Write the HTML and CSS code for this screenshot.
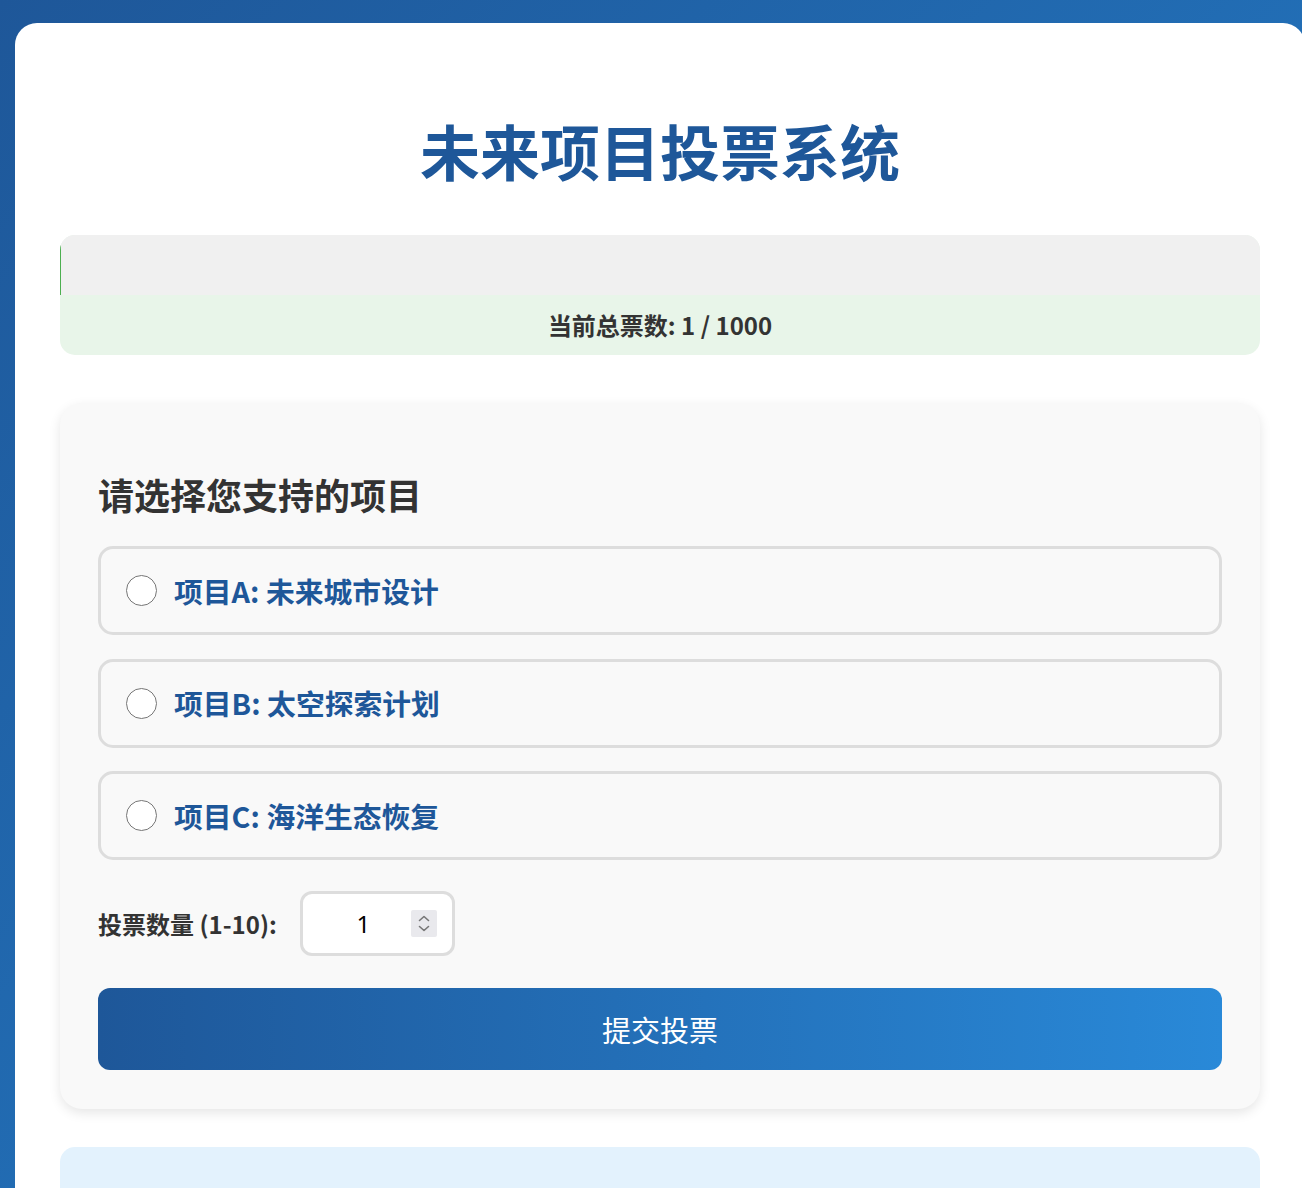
FILE: index.html
```html
<!DOCTYPE html>
<html lang="zh-CN">
<head>
<meta charset="UTF-8">
<title>未来项目投票系统</title>
<link rel="stylesheet" href="styles.css">
</head>
<body>
<div class="container">
  <h1 class="title">未来项目投票系统</h1>

  <div class="progress-box">
    <div class="progress-track"><div class="progress-fill" style="width:0.1%"></div></div>
    <div class="progress-text">当前总票数: 1 / 1000</div>
  </div>

  <div class="vote-card">
    <h2 class="section-title">请选择您支持的项目</h2>
    <label class="option"><input type="radio" name="project" class="radio"><span class="option-label">项目A: 未来城市设计</span></label>
    <label class="option"><input type="radio" name="project" class="radio"><span class="option-label">项目B: 太空探索计划</span></label>
    <label class="option"><input type="radio" name="project" class="radio"><span class="option-label">项目C: 海洋生态恢复</span></label>

    <div class="count-row">
      <label class="count-label" for="count">投票数量 (1-10):</label>
      <div class="count-field">
        <input id="count" class="count-input" type="number" min="1" max="10" value="1">
        <span class="spinner" aria-hidden="true">
          <svg width="26" height="27" viewBox="0 0 26 27"><path d="M8.5 10.5 L13 6.5 L17.5 10.5" fill="none" stroke="#777" stroke-width="1.6" stroke-linecap="round" stroke-linejoin="round"/><path d="M8.5 16.5 L13 20.5 L17.5 16.5" fill="none" stroke="#777" stroke-width="1.6" stroke-linecap="round" stroke-linejoin="round"/></svg>
        </span>
      </div>
    </div>

    <button class="submit" type="button">提交投票</button>
  </div>

  <div class="results"></div>
</div>
</body>
</html>
```

FILE: styles.css
```css
html {
  overflow: hidden;
}
body {
  margin: 0;
  padding: 23px 0 40px 15px;
  background: linear-gradient(135deg, #1e5799 0%, #2374bd 60%, #2989d8 100%);
  font-family: "Noto Sans CJK SC", "Noto Sans", sans-serif;
  color: #333;
}
.container {
  width: 1200px;
  padding: 45px 45px 60px;
  background: #fff;
  border-radius: 22px;
}
.title {
  margin: 46px 0 49px;
  font-size: 60px;
  line-height: 72px;
  font-weight: 700;
  color: #1e5799;
  text-align: center;
}
.progress-box {
  border-radius: 15px;
  overflow: hidden;
  background: #e8f5e9;
}
.progress-track {
  height: 60px;
  background: #f0f0f0;
}
.progress-fill {
  height: 100%;
  background: #4caf50;
}
.progress-text {
  padding: 12px 0 12px;
  font-size: 24px;
  line-height: 36px;
  font-weight: 700;
  text-align: center;
  color: #333;
}
.vote-card {
  margin-top: 48px;
  padding: 38px 38px 39px;
  background: #f9f9f9;
  border-radius: 22px;
  box-shadow: 0 4px 12px rgba(0, 0, 0, 0.1);
}
.section-title {
  margin: 29px 0 28px;
  font-size: 36px;
  line-height: 48px;
  font-weight: 700;
  color: #333;
}
.option {
  display: flex;
  align-items: center;
  gap: 17px;
  height: 83px;
  padding: 0 25px;
  margin-bottom: 23.5px;
  border: 3px solid #ddd;
  border-radius: 15px;
  cursor: pointer;
}
.radio {
  appearance: none;
  -webkit-appearance: none;
  margin: 0;
  width: 31px;
  height: 31px;
  border: 1.5px solid #767676;
  border-radius: 50%;
  background: #fff;
}
.option-label {
  font-size: 28.8px;
  line-height: 40px;
  font-weight: 700;
  color: #1e5799;
}
.count-row {
  display: flex;
  align-items: center;
  gap: 23px;
  margin-top: 30.5px;
}
.count-label {
  font-size: 24px;
  font-weight: 700;
  color: #333;
}
.count-field {
  position: relative;
}
.count-input {
  box-sizing: border-box;
  width: 155px;
  height: 65px;
  padding: 0 42px 0 14px;
  border: 3px solid #ddd;
  border-radius: 12px;
  background: #fff;
  font-family: "Noto Sans", sans-serif;
  font-size: 24px;
  color: #000;
  text-align: center;
  -moz-appearance: textfield;
}
.count-input::-webkit-inner-spin-button,
.count-input::-webkit-outer-spin-button {
  -webkit-appearance: none;
  margin: 0;
}
.spinner {
  position: absolute;
  left: 111px;
  top: 19px;
  width: 26px;
  height: 27px;
  background: #e9e9ed;
  border-radius: 2px;
}
.spinner svg {
  display: block;
}
.submit {
  display: block;
  width: 100%;
  height: 82px;
  margin-top: 32px;
  border: none;
  border-radius: 12px;
  background: linear-gradient(90deg, #1e5799 0%, #2989d8 100%);
  color: #fff;
  font-family: "Noto Sans CJK SC", sans-serif;
  font-size: 29px;
  font-weight: 400;
  cursor: pointer;
}
.results {
  margin-top: 38px;
  height: 300px;
  background: #e3f2fd;
  border-radius: 15px;
}
```
